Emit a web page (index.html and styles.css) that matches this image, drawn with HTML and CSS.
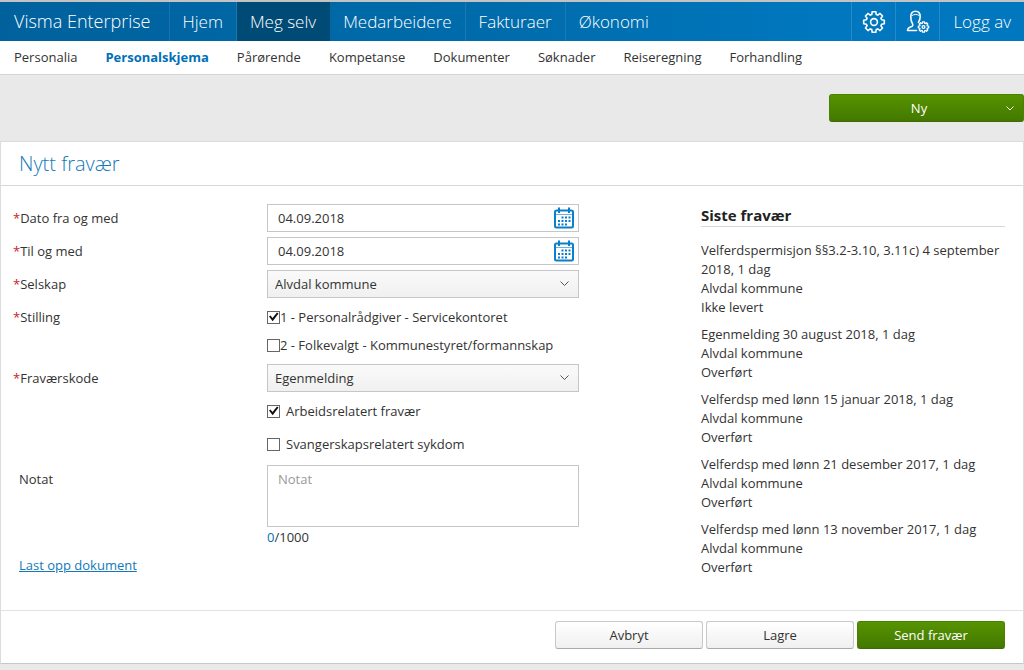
FILE: index.html
```html
<!DOCTYPE html>
<html lang="no">
<head>
<meta charset="utf-8">
<meta name="viewport" content="width=device-width, initial-scale=1">
<title>Visma Enterprise</title>
<link rel="stylesheet" href="styles.css">
</head>
<body>
<header class="topbar">
  <a class="brand" href="#">Visma Enterprise</a>
  <nav class="mainnav" aria-label="Hovedmeny">
    <a href="#">Hjem</a>
    <a class="active" href="#">Meg selv</a>
    <a href="#">Medarbeidere</a>
    <a href="#">Fakturaer</a>
    <a href="#">Økonomi</a>
  </nav>
  <div class="tools">
    <button class="tool" type="button" aria-label="Innstillinger">
      <svg width="24" height="24" viewBox="-12 -12 24 24"><path d="M-2.2-7.6L-1.8-10.3H1.8L2.2-7.6L3.82-6.93L6-8.55L8.55-6L6.93-3.82L7.6-2.2L10.3-1.8V1.8L7.6 2.2L6.93 3.82L8.55 6L6 8.55L3.82 6.93L2.2 7.6L1.8 10.3H-1.8L-2.2 7.6L-3.82 6.93L-6 8.55L-8.55 6L-6.93 3.82L-7.6 2.2L-10.3 1.8V-1.8L-7.6-2.2L-6.93-3.82L-8.55-6L-6-8.55L-3.82-6.93Z"/><circle r="3.4"/></svg>
    </button>
    <button class="tool" type="button" aria-label="Brukerinnstillinger">
      <svg width="24" height="24" viewBox="0 0 24 24"><path d="M10.5 20.5H1.5C1.5 18 3.5 17 6.2 16.2C7 15.8 7 14.6 6.2 13.2C5.2 11.5 4.8 9.5 4.8 6.5C4.8 3.2 6.5 1.2 9.5 1.2S14.2 3.2 14.2 6.5C14.2 9 13.5 10.8 12.4 12.4"/><path d="M6 5.5C8 4 11.5 4 13 5.5" stroke-width="1"/><g transform="translate(17.5 17) scale(.5)" stroke-width="2.6"><path d="M-2.2-7.6L-1.8-10.3H1.8L2.2-7.6L3.82-6.93L6-8.55L8.55-6L6.93-3.82L7.6-2.2L10.3-1.8V1.8L7.6 2.2L6.93 3.82L8.55 6L6 8.55L3.82 6.93L2.2 7.6L1.8 10.3H-1.8L-2.2 7.6L-3.82 6.93L-6 8.55L-8.55 6L-6.93 3.82L-7.6 2.2L-10.3 1.8V-1.8L-7.6-2.2L-6.93-3.82L-8.55-6L-6-8.55L-3.82-6.93Z"/><circle r="2.8"/></g></svg>
    </button>
    <a class="logout" href="#">Logg av</a>
  </div>
</header>
<nav class="subnav" aria-label="Undermeny">
  <a href="#">Personalia</a>
  <a class="active" href="#">Personalskjema</a>
  <a href="#">Pårørende</a>
  <a href="#">Kompetanse</a>
  <a href="#">Dokumenter</a>
  <a href="#">Søknader</a>
  <a href="#">Reiseregning</a>
  <a href="#">Forhandling</a>
</nav>
<div class="actions">
  <button class="btn primary new" type="button"><span>Ny</span><svg width="8" height="5" viewBox="0 0 8 5"><path d="M.5.5L4 4L7.5.5"/></svg></button>
</div>
<main class="panel">
  <h1 class="title">Nytt fravær</h1>
  <div class="content">
    <form class="form" id="absence">
      <div class="row">
        <label class="name" for="from"><span class="req">*</span>Dato fra og med</label>
        <div class="date">
          <input id="from" type="text" value="04.09.2018">
          <button type="button" aria-label="Velg fra-dato"><svg width="22" height="22" viewBox="0 0 22 22"><rect x="2" y="3.5" width="18" height="17" rx="1.5"/><path d="M3 7.5H19" stroke-width="1" opacity=".6"/><path d="M6 .5V6M16 .5V6"/><path class="dots" d="M8.5 10.5H17.5M5 14H17.5M5 17.5H14"/></svg></button>
        </div>
      </div>
      <div class="row">
        <label class="name" for="to"><span class="req">*</span>Til og med</label>
        <div class="date">
          <input id="to" type="text" value="04.09.2018">
          <button type="button" aria-label="Velg til-dato"><svg width="22" height="22" viewBox="0 0 22 22"><rect x="2" y="3.5" width="18" height="17" rx="1.5"/><path d="M3 7.5H19" stroke-width="1" opacity=".6"/><path d="M6 .5V6M16 .5V6"/><path class="dots" d="M8.5 10.5H17.5M5 14H17.5M5 17.5H14"/></svg></button>
        </div>
      </div>
      <div class="row">
        <label class="name" for="company"><span class="req">*</span>Selskap</label>
        <select class="select" id="company"><option>Alvdal kommune</option></select>
      </div>
      <div class="row" role="group" aria-labelledby="position">
        <span class="name" id="position"><span class="req">*</span>Stilling</span>
        <div class="positions">
          <label class="check"><input type="checkbox" checked>1 - Personalrådgiver - Servicekontoret</label>
          <label class="check"><input type="checkbox">2 - Folkevalgt - Kommunestyret/formannskap</label>
        </div>
      </div>
      <div class="row">
        <label class="name" for="code"><span class="req">*</span>Fraværskode</label>
        <div class="code">
          <select class="select" id="code"><option>Egenmelding</option></select>
          <label class="check spaced"><input type="checkbox" checked>Arbeidsrelatert fravær</label>
          <label class="check spaced"><input type="checkbox">Svangerskapsrelatert sykdom</label>
        </div>
      </div>
      <div class="row note">
        <label class="name plain" for="note">Notat</label>
        <div>
          <textarea id="note" placeholder="Notat"></textarea>
          <div class="counter"><span>0</span>/1000</div>
        </div>
      </div>
      <a class="upload" href="#">Last opp dokument</a>
    </form>
    <aside class="recent">
      <h2>Siste fravær</h2>
      <ul>
        <li>Velferdspermisjon §§3.2-3.10, 3.11c) 4 september 2018, 1 dag<br>Alvdal kommune<br>Ikke levert</li>
        <li>Egenmelding 30 august 2018, 1 dag<br>Alvdal kommune<br>Overført</li>
        <li>Velferdsp med lønn 15 januar 2018, 1 dag<br>Alvdal kommune<br>Overført</li>
        <li>Velferdsp med lønn 21 desember 2017, 1 dag<br>Alvdal kommune<br>Overført</li>
        <li>Velferdsp med lønn 13 november 2017, 1 dag<br>Alvdal kommune<br>Overført</li>
      </ul>
    </aside>
  </div>
  <footer class="buttons">
    <button class="btn" type="button">Avbryt</button>
    <button class="btn" type="submit" form="absence">Lagre</button>
    <button class="btn primary" type="submit" form="absence">Send fravær</button>
  </footer>
</main>
</body>
</html>
```
FILE: styles.css
```css
* { box-sizing: border-box; }
body {
  margin: 0;
  background: #e9e9e9;
  color: #333;
  font: 13px/18px "Open Sans", "Noto Sans", sans-serif;
}
a { color: inherit; text-decoration: none; }
button, input, select, textarea { font: inherit; color: inherit; }
svg { display: block; fill: none; }

.topbar {
  display: flex;
  height: 41px;
  border-top: 2px solid #c3c3c3;
  background: linear-gradient(90deg, #00619d, #006cac 50%, #0077be 80%);
  color: #fff;
  font-size: 17px;
  font-weight: 300;
  line-height: 39px;
}
.brand {
  padding: 0 18px 0 14px;
  border-right: 1px solid #1b74ad;
  font-size: 18px;
  white-space: nowrap;
}
.mainnav { display: flex; }
.mainnav a {
  padding: 0 13px;
  border-right: 1px solid #1b78b2;
  white-space: nowrap;
}
.mainnav a:last-child { border-right: 0; }
.mainnav .active { background: #004a76; border-color: #004a76; }
.tools { display: flex; margin-left: auto; }
.tool {
  display: flex;
  align-items: center;
  justify-content: center;
  width: 44px;
  padding: 0;
  border: 0;
  border-left: 1px solid #2a89c8;
  background: none;
}
.tool svg { stroke: #fff; stroke-width: 1.6; stroke-linejoin: round; stroke-linecap: round; }
.logout { padding: 0 13px; border-left: 1px solid #2a89c8; white-space: nowrap; }

.subnav {
  display: flex;
  gap: 28px;
  height: 34px;
  padding: 0 14px;
  border-bottom: 1px solid #d4d4d4;
  background: #fff;
  line-height: 33px;
}
.subnav .active { color: #0070b8; font-weight: 700; }

.actions { display: flex; justify-content: flex-end; padding: 19px 0; }
.btn {
  width: 148px;
  height: 28px;
  padding: 0;
  border: 1px solid #c8c8c8;
  border-bottom-color: #aaa;
  border-radius: 3px;
  background: linear-gradient(#fff, #f0f0f0);
}
.primary {
  border-color: #4a8200;
  border-bottom-color: #3d6c00;
  background: linear-gradient(#569300, #437800);
  color: #fff;
}
.new { display: flex; align-items: center; width: 195px; padding: 0 9px 0 2px; }
.new span { flex: 1; text-align: center; }
.new svg { stroke: #fff; }

.panel { border: 1px solid #dcdcdc; border-bottom-color: #c8c8c8; background: #fff; }
.title {
  margin: 0;
  padding: 0 18px;
  border-bottom: 1px solid #d8d8d8;
  color: #1379ba;
  font-size: 20px;
  font-weight: 300;
  line-height: 43px;
}
.content {
  display: grid;
  grid-template-columns: minmax(0, 1fr) 304px;
  gap: 24px;
  padding: 18px 18px 33px 12px;
}
.form { display: flex; flex-direction: column; gap: 5px; }
.row { display: grid; grid-template-columns: 254px minmax(0, 312px); }
.name { line-height: 28px; }
.plain, .upload { padding-left: 6px; }
.req { color: #c8202a; }
.date { display: flex; height: 28px; border: 1px solid #c6c6c6; background: #fff; }
.date input { flex: 1; min-width: 0; padding: 0 10px; border: 0; background: none; outline: 0; }
.date button { padding: 2px 3px; border: 0; background: none; }
.date svg { stroke: #0a7fcb; stroke-width: 2; }
.date .dots { stroke-width: 2; stroke-dasharray: 2 1.5; }
.select {
  width: 100%;
  height: 28px;
  padding: 0 24px 0 7px;
  border: 1px solid #c6c6c6;
  border-radius: 0;
  background:
    url("data:image/svg+xml,%3Csvg xmlns='http://www.w3.org/2000/svg' width='9' height='6' fill='none' stroke='%23555'%3E%3Cpath d='M.5.5L4.5 4.5L8.5.5'/%3E%3C/svg%3E") no-repeat right 9px center,
    linear-gradient(#fafafa, #f0f0f0);
  appearance: none;
}
.check { display: flex; align-items: center; height: 28px; }
.check input {
  display: grid;
  place-items: center;
  flex: none;
  width: 13px;
  height: 13px;
  margin: 0;
  border: 1px solid #666;
  background: #fff;
  appearance: none;
}
.check input:checked::before {
  content: "";
  width: 10px;
  height: 10px;
  background: #111;
  clip-path: polygon(5% 45%, 20% 35%, 40% 60%, 85% 5%, 100% 15%, 42% 92%);
}
.code { display: grid; gap: 5px; }
.spaced { gap: 6px; }
.note { margin-top: 2px; }
.note textarea {
  display: block;
  width: 100%;
  height: 62px;
  padding: 4px 10px;
  border: 1px solid #c6c6c6;
  resize: none;
}
.note textarea::placeholder { color: #999; }
.counter { line-height: 20px; }
.counter span { color: #0070b8; }
.upload { align-self: flex-start; margin-top: 4px; color: #1379ba; text-decoration: underline; }

.recent h2 {
  margin: 0 0 14px;
  border-bottom: 1px solid #d8d8d8;
  color: #222;
  font-size: 15px;
  line-height: 22px;
}
.recent ul {
  display: grid;
  gap: 8px;
  margin: 0;
  padding: 0;
  line-height: 19px;
  list-style: none;
}

.buttons {
  display: flex;
  justify-content: flex-end;
  gap: 3px;
  padding: 10px 18px 14px;
  border-top: 1px solid #e2e2e2;
}
```
